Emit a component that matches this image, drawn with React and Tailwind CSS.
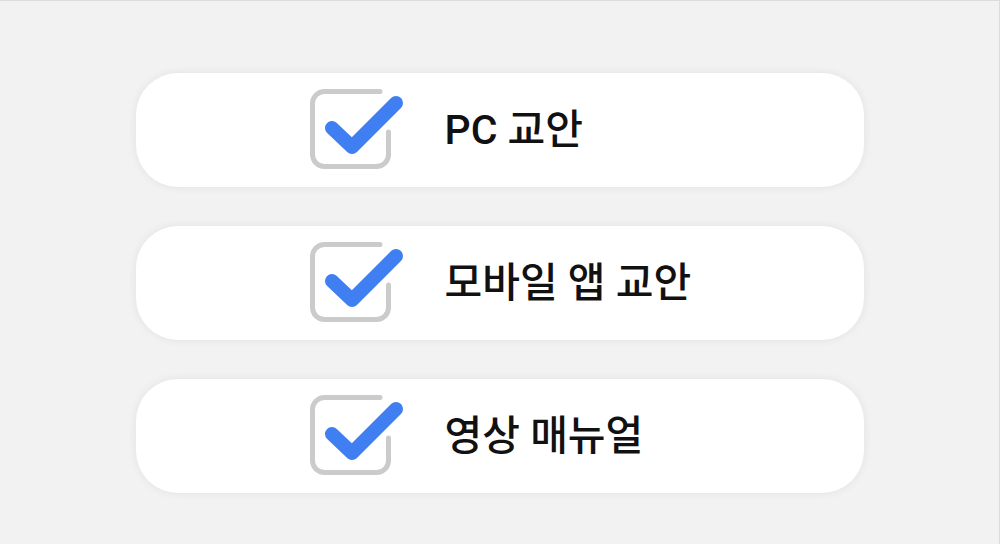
import React from 'react';

const items = ['PC 교안', '모바일 앱 교안', '영상 매뉴얼'];

// Checked box: grey rounded square with a gap where the blue tick crosses it
function CheckIcon() {
  return (
    <svg width="96" height="82" viewBox="0 0 96 82" className="shrink-0">
      <path
        d="M78.5 43 V65.5 a12 12 0 0 1 -12 12 H14.5 a12 12 0 0 1 -12 -12 V14.5 a12 12 0 0 1 12 -12 H70"
        fill="none"
        stroke="#cbcbcb"
        strokeWidth="5"
        strokeLinecap="round"
      />
      <path
        d="M22 39 L42 58 L86 14"
        fill="none"
        stroke="#3f7ff2"
        strokeWidth="14"
        strokeLinecap="round"
        strokeLinejoin="round"
      />
    </svg>
  );
}

export default function App() {
  return (
    <div className="min-h-screen w-full bg-[#f2f2f2] border-t border-r border-[#dcdcdc] flex flex-col items-center pt-[72px] gap-[39px]">
      {items.map((label) => (
        <div
          key={label}
          className="w-[728px] h-[114px] bg-white rounded-[42px] shadow-[0_0_10px_rgba(0,0,0,0.07)] flex items-center pl-[174px]"
        >
          <CheckIcon />
          <span
            className="ml-[39px] text-[41px] font-medium text-[#111] leading-none"
            style={{ fontFamily: 'Roboto, "Noto Sans CJK KR", sans-serif' }}
          >
            {label}
          </span>
        </div>
      ))}
    </div>
  );
}
